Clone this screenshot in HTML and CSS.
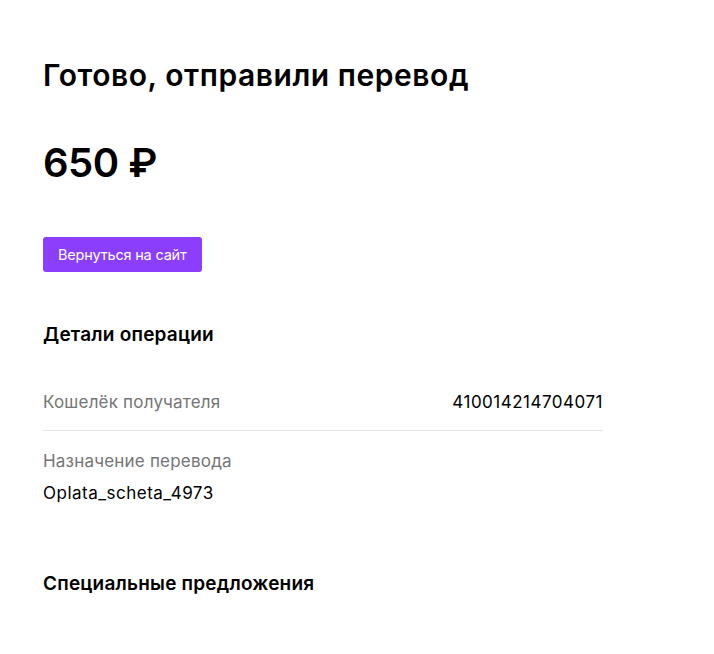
FILE: index.html
```html
<!DOCTYPE html>
<html lang="ru">
<head>
<meta charset="utf-8">
<link rel="stylesheet" href="styles.css">
</head>
<body>
<main class="page">
  <h1 class="title">Готово, отправили перевод</h1>
  <div class="amount">650 ₽</div>
  <button class="back-btn">Вернуться на сайт</button>
  <h2 class="section-title details-title">Детали операции</h2>
  <div class="details">
    <div class="row row-inline">
      <span class="label">Кошелёк получателя</span>
      <span class="value">410014214704071</span>
    </div>
    <div class="row row-stack">
      <span class="label">Назначение перевода</span>
      <span class="value">Oplata_scheta_4973</span>
    </div>
  </div>
  <h2 class="section-title offers-title">Специальные предложения</h2>
</main>
</body>
</html>
```
FILE: styles.css
```css
* { box-sizing: border-box; }
html, body { margin: 0; padding: 0; background: #fff; }
body {
  font-family: Inter, "Noto Sans", sans-serif;
  color: #000;
}
.page {
  width: 560px;
  margin-left: 43px;
  padding-top: 57px;
  display: flex;
  flex-direction: column;
  align-items: flex-start;
}
.title {
  margin: 0;
  font-size: 30px;
  line-height: 36px;
  font-weight: 600;
  letter-spacing: 0.55px;
}
.amount {
  margin-top: 46px;
  font-size: 40px;
  line-height: 48px;
  font-weight: 600;
  letter-spacing: -0.5px;
}
.back-btn {
  margin-top: 50px;
  height: 35px;
  padding: 0 15px;
  border: 0;
  border-radius: 3px;
  background: #8b3ffd;
  color: #fff;
  font-family: inherit;
  font-size: 14.5px;
  letter-spacing: -0.2px;
}
.section-title {
  margin: 0;
  font-size: 19px;
  line-height: 24px;
  font-weight: 600;
  letter-spacing: 0.2px;
}
.details-title { margin-top: 51px; }
.details { width: 100%; margin-top: 44px; }
.row { width: 100%; }
.row-inline {
  display: flex;
  justify-content: space-between;
  align-items: baseline;
  padding-bottom: 17px;
  border-bottom: 1px solid #e8e8e8;
}
.row-stack {
  display: flex;
  flex-direction: column;
  gap: 10px;
  padding-top: 19px;
}
.label { color: #757575; font-size: 17px; line-height: 22px; letter-spacing: 0.2px; }
.value { font-size: 17px; line-height: 22px; letter-spacing: 0.5px; }
.offers-title { margin-top: 68px; }
```
